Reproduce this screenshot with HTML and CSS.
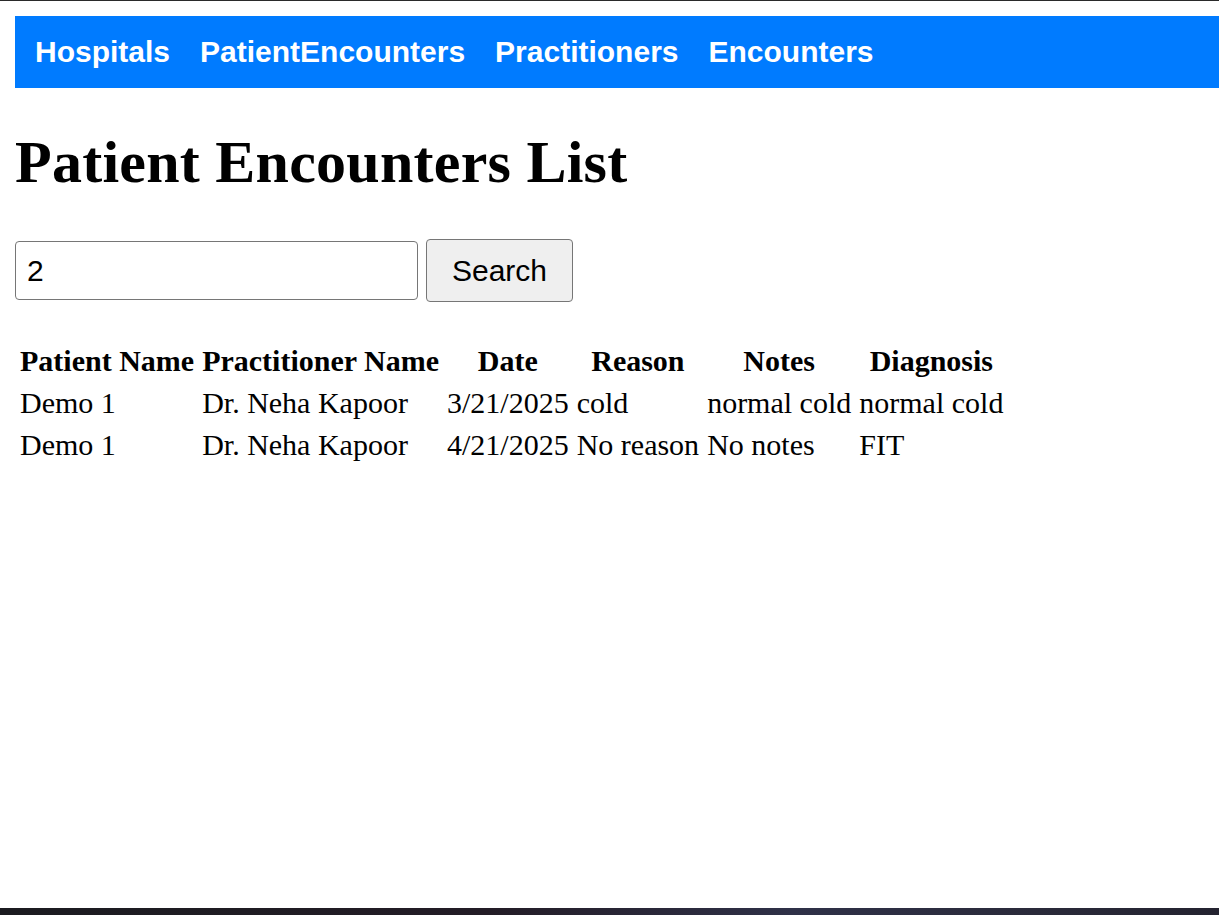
FILE: index.html
```html
<!DOCTYPE html>
<html lang="en">
<head>
<meta charset="utf-8">
<title>Patient Encounters List</title>
<link rel="stylesheet" href="styles.css">
</head>
<body>
<nav class="navbar">
  <a class="nav-link" href="#">Hospitals</a>
  <a class="nav-link" href="#">PatientEncounters</a>
  <a class="nav-link" href="#">Practitioners</a>
  <a class="nav-link" href="#">Encounters</a>
</nav>
<main class="content">
  <h1 class="page-title">Patient Encounters List</h1>
  <form class="search-form">
    <input class="search-input" type="text" value="2">
    <button class="search-button" type="button">Search</button>
  </form>
  <table class="encounters">
    <thead>
      <tr>
        <th>Patient Name</th>
        <th>Practitioner Name</th>
        <th>Date</th>
        <th>Reason</th>
        <th>Notes</th>
        <th>Diagnosis</th>
      </tr>
    </thead>
    <tbody>
      <tr>
        <td>Demo 1</td>
        <td>Dr. Neha Kapoor</td>
        <td>3/21/2025</td>
        <td>cold</td>
        <td>normal cold</td>
        <td>normal cold</td>
      </tr>
      <tr>
        <td>Demo 1</td>
        <td>Dr. Neha Kapoor</td>
        <td>4/21/2025</td>
        <td>No reason</td>
        <td>No notes</td>
        <td>FIT</td>
      </tr>
    </tbody>
  </table>
</main>
<div class="taskbar"></div>
</body>
</html>
```
FILE: styles.css
```css
html {
  border-top: 1px solid #2a2a2a;
  height: 914px;
  overflow: hidden;
}
body {
  margin: 15px 0 0 15px;
  font-family: "Liberation Serif", "Times New Roman", serif;
  font-size: 30px;
  color: #000;
  background: #fff;
  height: 899px;
  position: relative;
}
.navbar {
  background: #007bff;
  display: flex;
  align-items: center;
  gap: 30px;
  height: 72px;
  padding: 0 20px;
  box-sizing: border-box;
}
.nav-link {
  color: #fff;
  text-decoration: none;
  font-family: "Liberation Sans", Arial, sans-serif;
  font-weight: bold;
  font-size: 30px;
}
.page-title {
  font-size: 60px;
  font-weight: bold;
  margin: 40px 0 42px 0;
  line-height: 69px;
  letter-spacing: 0.25px;
}
.search-form {
  display: flex;
  align-items: center;
  gap: 8px;
  margin: 0 0 36px 0;
}
.search-input {
  width: 403px;
  height: 59px;
  box-sizing: border-box;
  border: 1px solid #767676;
  border-radius: 4px;
  padding: 0 11px;
  font-family: "Liberation Sans", Arial, sans-serif;
  font-size: 30px;
  color: #000;
}
.search-button {
  width: 147px;
  height: 63px;
  box-sizing: border-box;
  border: 1px solid #767676;
  border-radius: 4px;
  background: #efefef;
  font-family: "Liberation Sans", Arial, sans-serif;
  font-size: 30px;
  color: #000;
}
.encounters {
  border-collapse: separate;
  border-spacing: 4px;
  margin-left: -1px;
}
.encounters th,
.encounters td {
  padding: 2px;
  font-size: 30px;
}
.encounters th {
  font-weight: bold;
  text-align: center;
}
.encounters td {
  text-align: left;
}
.taskbar {
  position: fixed;
  left: 0;
  right: 0;
  bottom: 0;
  height: 7px;
  background: linear-gradient(90deg, #1b1b20 0%, #231c26 40%, #2f3148 65%, #2a2a3a 85%, #242330 100%);
}
```
